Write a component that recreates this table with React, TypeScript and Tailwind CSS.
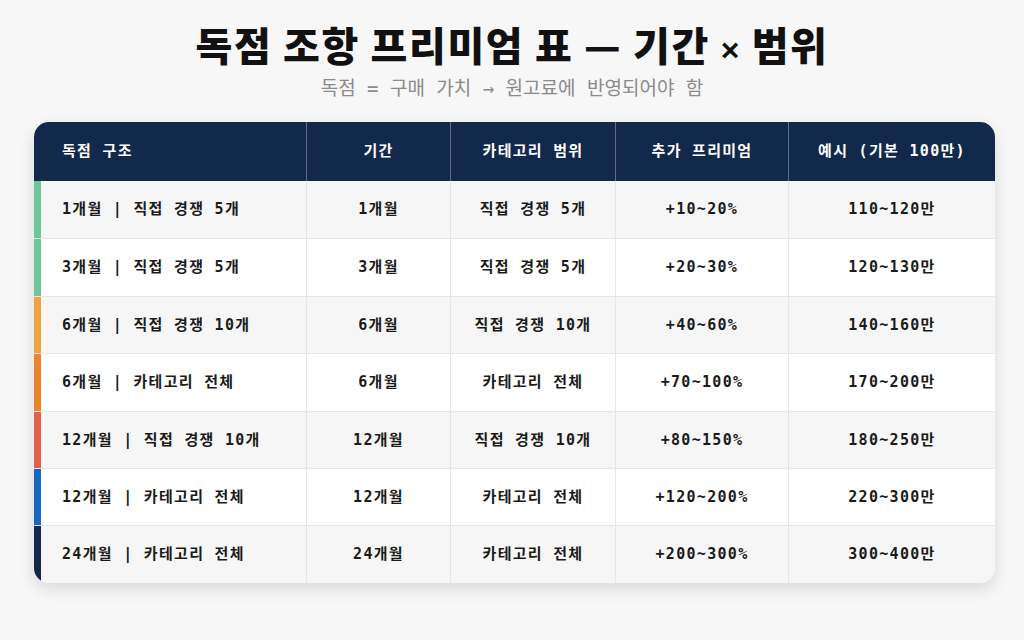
import React from "react";

type Row = {
  label: string;
  period: string;
  scope: string;
  premium: string;
  example: string;
  bar: string;
};

const rows: Row[] = [
  { label: "1개월 | 직접 경쟁 5개", period: "1개월", scope: "직접 경쟁 5개", premium: "+10~20%", example: "110~120만", bar: "bg-[#6cc79d]" },
  { label: "3개월 | 직접 경쟁 5개", period: "3개월", scope: "직접 경쟁 5개", premium: "+20~30%", example: "120~130만", bar: "bg-[#6cc79d]" },
  { label: "6개월 | 직접 경쟁 10개", period: "6개월", scope: "직접 경쟁 10개", premium: "+40~60%", example: "140~160만", bar: "bg-[#f2a040]" },
  { label: "6개월 | 카테고리 전체", period: "6개월", scope: "카테고리 전체", premium: "+70~100%", example: "170~200만", bar: "bg-[#ec8429]" },
  { label: "12개월 | 직접 경쟁 10개", period: "12개월", scope: "직접 경쟁 10개", premium: "+80~150%", example: "180~250만", bar: "bg-[#e35f48]" },
  { label: "12개월 | 카테고리 전체", period: "12개월", scope: "카테고리 전체", premium: "+120~200%", example: "220~300만", bar: "bg-[#1667c2]" },
  { label: "24개월 | 카테고리 전체", period: "24개월", scope: "카테고리 전체", premium: "+200~300%", example: "300~400만", bar: "bg-[#13284a]" },
];

const cols = "grid grid-cols-[273px_144px_165px_173px_206px]";
const mono = "font-['DejaVu_Sans_Mono','Noto_Sans_CJK_KR',monospace]";

export default function App() {
  return (
    <div className="min-h-screen w-full bg-[#f7f7f7] pt-[16px]">
      <h1 className="h-[56px] overflow-hidden text-center font-['Noto_Sans_CJK_KR',sans-serif] text-[40px] font-black leading-[56px] tracking-[1.6px] text-[#111]">
        독점 조항 프리미엄 표 — 기간 <span className="font-['Liberation_Sans',sans-serif] text-[32px] font-bold leading-none">×</span> 범위
      </h1>
      <p className={`mt-[3px] text-center text-[19px] leading-[27px] text-[#8a8a8a] ${mono}`}>
        독점 = 구매 가치 → 원고료에 반영되어야 함
      </p>

      <div className={`ml-[34px] mt-[20px] w-[961px] overflow-hidden rounded-[15px] bg-white shadow-[0_6px_16px_rgba(0,0,0,0.12)] ${mono}`}>
        <div className={`${cols} h-[59px] bg-[#13294b] text-[15px] font-bold tracking-[1.3px] text-white`}>
          <div className="flex items-center border-r border-[#5d6e88] pl-[28px]">독점 구조</div>
          <div className="flex items-center justify-center border-r border-[#5d6e88]">기간</div>
          <div className="flex items-center justify-center border-r border-[#5d6e88]">카테고리 범위</div>
          <div className="flex items-center justify-center border-r border-[#5d6e88]">추가 프리미엄</div>
          <div className="flex items-center justify-center">예시 (기본 100만)</div>
        </div>
        {rows.map((r, i) => (
          <div
            key={i}
            className={`${cols} h-[57.4px] text-[15px] font-bold tracking-[1.3px] text-[#1b1b1b] ${
              i % 2 === 0 ? "bg-[#f6f6f6]" : "bg-white"
            } ${i > 0 ? "border-t border-[#e6e6e6]" : ""}`}
          >
            <div className="flex items-center border-r border-[#e6e6e6]">
              <span className={`h-full w-[7px] ${r.bar}`} />
              <span className="pl-[21px]">{r.label}</span>
            </div>
            <div className="flex items-center justify-center border-r border-[#e6e6e6]">{r.period}</div>
            <div className="flex items-center justify-center border-r border-[#e6e6e6]">{r.scope}</div>
            <div className="flex items-center justify-center border-r border-[#e6e6e6]">{r.premium}</div>
            <div className="flex items-center justify-center">{r.example}</div>
          </div>
        ))}
      </div>
    </div>
  );
}
